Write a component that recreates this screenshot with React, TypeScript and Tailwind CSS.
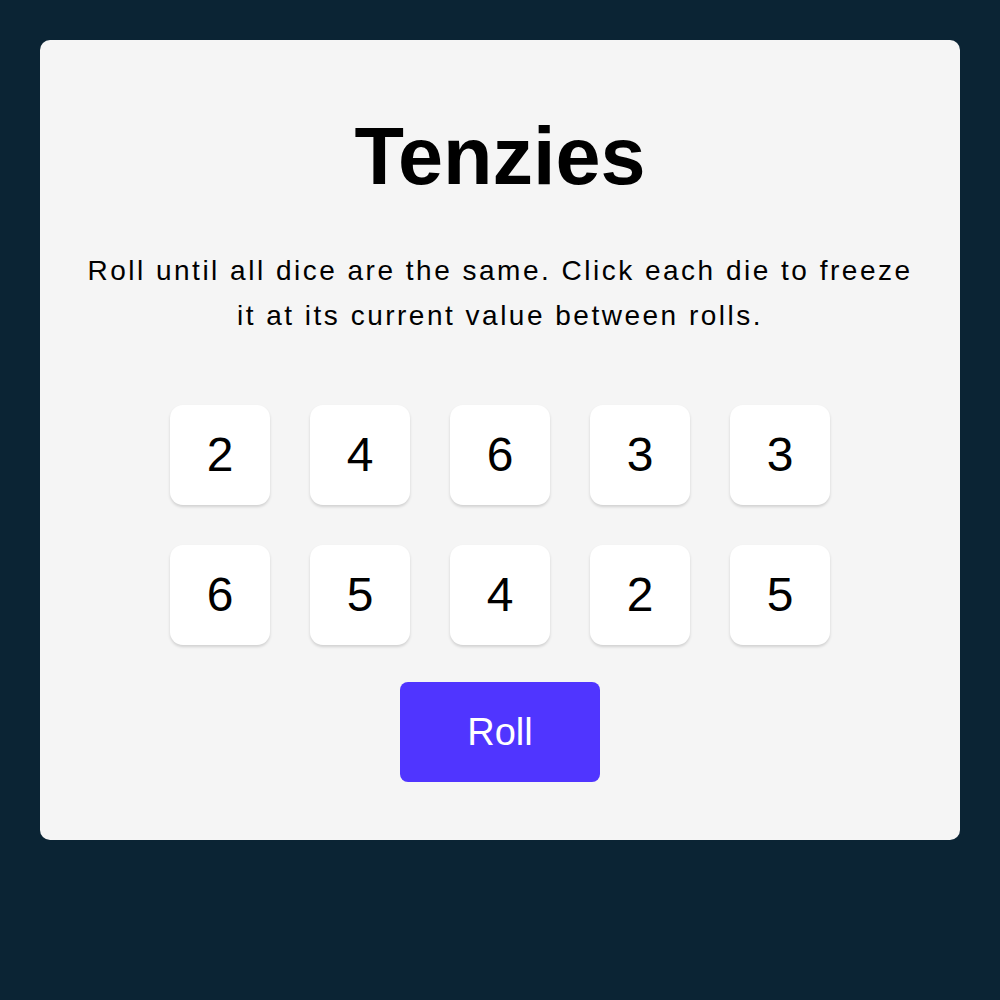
const dice = [2, 4, 6, 3, 3, 6, 5, 4, 2, 5];

export default function App() {
  return (
    <div
      className="min-h-[1000px] w-full bg-[#0B2434] p-10"
      style={{ fontFamily: '"Liberation Sans", Arial, sans-serif' }}
    >
      <main className="flex h-[800px] flex-col items-center rounded-[10px] bg-[#F5F5F5]">
        <h1 className="mt-[66px] text-[81px] font-bold leading-[100px] text-black">Tenzies</h1>
        <p className="mt-[42px] max-w-[840px] text-center text-[28px] leading-[45px] tracking-[2.5px] text-black">
          Roll until all dice are the same. Click each die to freeze it at its current value between rolls.
        </p>
        <div className="mt-[67px] grid grid-cols-5 gap-10">
          {dice.map((d, i) => (
            <button
              key={i}
              className="flex h-[100px] w-[100px] items-center justify-center rounded-[13px] bg-white text-[48px] text-black shadow-[0_2px_3px_rgba(0,0,0,0.15)]"
            >
              {d}
            </button>
          ))}
        </div>
        <button className="mt-[37px] h-[100px] w-[200px] rounded-[8px] bg-[#5035FF] text-[38px] text-white">
          Roll
        </button>
      </main>
    </div>
  );
}
